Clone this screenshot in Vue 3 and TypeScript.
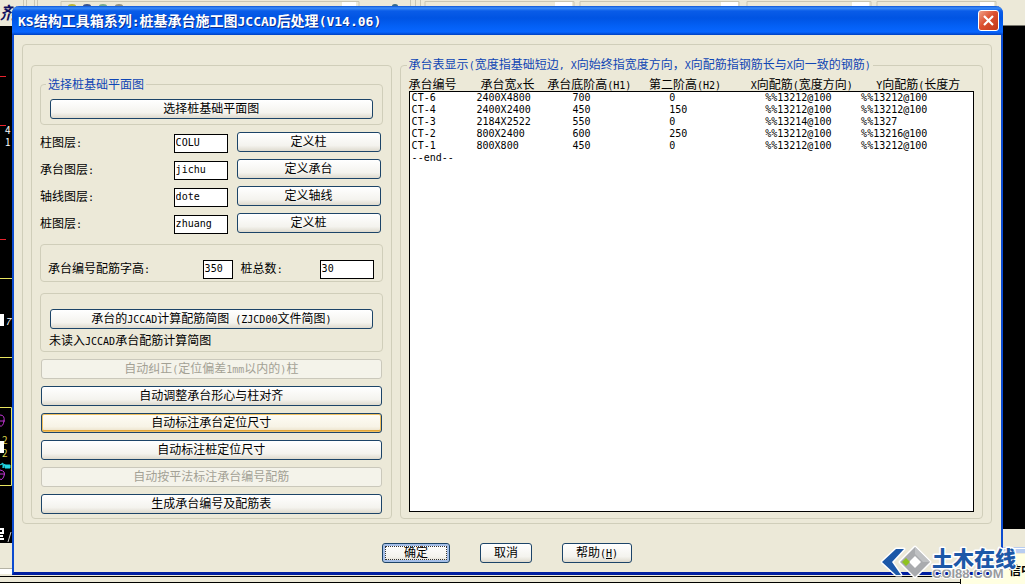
<script setup lang="ts">
import { h, ref, type FunctionalComponent } from 'vue'

interface Layer { id: string; label: string; value: string; action: string }
interface Action { text: string; disabled?: boolean; hot?: boolean }

// Half-width runs are set in a monospaced face, exactly half the width of a Chinese character.
const Mixed: FunctionalComponent<{ text: string }> = (props) =>
  (props.text.match(/[\x20-\x7e]+|[^\x20-\x7e]+/g) ?? []).map((run) =>
    /^[\x20-\x7e]/.test(run) ? h('span', { class: 'half' }, run) : run,
  )
Mixed.props = ['text']

const layers = ref<Layer[]>([
  { id: 'column', label: '柱图层:', value: 'COLU', action: '定义柱' },
  { id: 'cap', label: '承台图层:', value: 'jichu', action: '定义承台' },
  { id: 'axis', label: '轴线图层:', value: 'dote', action: '定义轴线' },
  { id: 'pile', label: '桩图层:', value: 'zhuang', action: '定义桩' },
])
const textHeight = ref('350')
const pileTotal = ref('30')

const actions: Action[] = [
  { text: '自动纠正(定位偏差1mm以内的)柱', disabled: true },
  { text: '自动调整承台形心与柱对齐' },
  { text: '自动标注承台定位尺寸', hot: true },
  { text: '自动标注桩定位尺寸' },
  { text: '自动按平法标注承台编号配筋', disabled: true },
  { text: '生成承台编号及配筋表' },
]

const headings = ['承台编号', '承台宽x长', '承台底阶高(H1)', '第二阶高(H2)', 'X向配筋(宽度方向)', 'Y向配筋(长度方']
const rows: string[][] = [
  ['CT-6', '2400X4800', '700', '0', '%%13212@100', '%%13212@100'],
  ['CT-4', '2400X2400', '450', '150', '%%13212@100', '%%13212@100'],
  ['CT-3', '2184X2522', '550', '0', '%%13214@100', '%%1327'],
  ['CT-2', '800X2400', '600', '250', '%%13212@100', '%%13216@100'],
  ['CT-1', '800X800', '450', '0', '%%13212@100', '%%13212@100'],
]
</script>

<template>
  <div class="desktop">
    <svg class="toolbar" height="6" aria-hidden="true">
      <g fill="none" stroke="#c9c6b4">
        <path d="M23.500 0V6M26.500 0V6M34.500 0V6M37.500 0V6M61 6V1.500H359V6M410.500 0V6M415.500 0V6M420.500 0V6M425 6V1.500H574V6M580 6V1.500H739V6M747 6V1.500H871V6M877 6V1.500H996V6" />
      </g>
      <path d="M342 2h14v4h-14zM555 2h17v4h-17zM721 2h17v4h-17zM852 2h17v4h-17zM980 2h14v4h-14z" fill="#fff" />
      <ellipse cx="72" cy="6" rx="4" ry="2" fill="#b9b63a" />
      <ellipse cx="87" cy="6" rx="4" ry="2" fill="#39538c" />
      <ellipse cx="103" cy="6" rx="4" ry="2" fill="#77a98a" />
      <ellipse cx="119" cy="6" rx="4" ry="2" fill="#909080" />
      <ellipse cx="395" cy="6" rx="3" ry="2" fill="#356a8a" />
    </svg>
    <svg class="drawing left" width="14" height="584" viewBox="0 0 14 584" aria-hidden="true">
      <path d="M0 0H14V26H0z" fill="#ece9d8" />
      <path d="M0 26H14V543H0z" fill="#000" />
      <text x="0" y="19" font-size="17" font-weight="700" font-style="italic" fill="#10105e">剂</text>
      <path d="M0 76H6V77H0zM0 125H6V126H0zM0 239H6V240H0z" fill="#e8232d" />
      <path d="M0 278.500H12M0 357.500H12M0 407.500H11.500V485.500H0" stroke="#e8e560" fill="none" />
      <text x="5" y="134" font-size="10" fill="#fff">4</text>
      <text x="5" y="146" font-size="10" fill="#fff">1</text>
      <path d="M0 314H4V326H0z" fill="#fff" />
      <text x="5" y="325" font-size="10" font-style="italic" fill="#fff">7</text>
      <path d="M0 415Q5 415 4 421T0 426M0 421H5M0 470Q6 471 4 476T0 479M0 474H5" stroke="#c235d5" fill="none" />
      <text x="2" y="444" font-size="10" fill="#dbd24c">2</text>
      <text x="2" y="457" font-size="10" fill="#dbd24c">2</text>
      <path d="M0 441H4V453H0z" fill="#fff" />
      <path d="M0 465L3 463 3 468 5 464M5 465H10V468H5z" stroke="#21d7e5" fill="#21d7e5" />
      <path d="M0 529H3V533H0M0 536H3M0 539H4" stroke="#fff" stroke-width="2" fill="none" />
      <path d="M8 542L11 532" stroke="#ccc" />
      <path d="M0 543H14V569H0z" fill="#ece9d8" />
      <path d="M0 568.500H14" stroke="#b5b3a5" />
      <path d="M0 569H14V574H0z" fill="#fff" />
    </svg>
    <svg class="drawing right" width="24" height="584" viewBox="0 0 24 584" aria-hidden="true">
      <path d="M0 0H24V25H0z" fill="#ece9d8" />
      <path d="M0 25.500H24" stroke="#77766d" />
      <path d="M0 26H24V529H0z" fill="#000" />
      <path d="M0 529H24V547H0z" fill="#ece9d8" />
      <path d="M0 547H24V553H0z" fill="#b8cdf0" />
      <path d="M0 548.500H24" stroke="#fff" />
    </svg>
    <div class="statusbar" aria-hidden="true"></div>
    <div class="tip"><span>信中</span></div>

    <main class="dialog">
      <header class="titlebar">
        <h1><Mixed text="KS结构工具箱系列:桩基承台施工图JCCAD后处理(V14.06)" /></h1>
        <button class="close" type="button" aria-label="关闭">
          <svg width="19" height="19" viewBox="0 0 19 19"><path d="M5 5L14 14M14 5L5 14" stroke="#fff" stroke-width="2.200" /></svg>
        </button>
      </header>

      <form class="body" @submit.prevent>
        <div class="frame panels">
          <section class="frame settings">
            <fieldset class="pick">
              <legend>选择桩基础平面图</legend>
              <button type="button" class="btn">选择桩基础平面图</button>
            </fieldset>

            <div class="layers">
              <div v-for="layer in layers" :key="layer.id" class="layer">
                <label :for="layer.id"><Mixed :text="layer.label" /></label>
                <input :id="layer.id" v-model="layer.value" type="text" />
                <button type="button" class="btn">{{ layer.action }}</button>
              </div>
            </div>

            <div class="frame numbers">
              <label for="text-height"><Mixed text="承台编号配筋字高:" /></label>
              <input id="text-height" v-model="textHeight" type="text" />
              <label for="pile-total"><Mixed text="桩总数:" /></label>
              <input id="pile-total" v-model="pileTotal" type="text" />
            </div>

            <div class="frame diagram">
              <button type="button" class="btn"><Mixed text="承台的JCCAD计算配筋简图 (ZJCD00文件简图)" /></button>
              <p><Mixed text="未读入JCCAD承台配筋计算简图" /></p>
            </div>

            <div class="actions">
              <button
                v-for="action in actions"
                :key="action.text"
                type="button"
                class="btn"
                :class="{ hot: action.hot }"
                :disabled="action.disabled"
              ><Mixed :text="action.text" /></button>
            </div>
          </section>

          <fieldset class="list">
            <legend><Mixed text="承台表显示(宽度指基础短边, X向始终指宽度方向，X向配筋指钢筋长与X向一致的钢筋)" /></legend>
            <table>
              <thead>
                <tr><th v-for="heading in headings" :key="heading" scope="col"><Mixed :text="heading" /></th></tr>
              </thead>
              <tbody>
                <tr v-for="row in rows" :key="row[0]">
                  <td v-for="(cell, i) in row" :key="i">{{ cell }}</td>
                </tr>
                <tr><td>--end--</td></tr>
              </tbody>
            </table>
          </fieldset>
        </div>

        <footer>
          <button type="submit" class="btn ok">确定</button>
          <button type="button" class="btn cancel">取消</button>
          <button type="button" class="btn help">帮助<span class="half">(<u>H</u>)</span></button>
        </footer>
      </form>
    </main>

    <svg class="brand" width="146" height="38" viewBox="0 0 146 38" role="img" aria-label="土木在线">
      <g stroke="#fff" stroke-width="3" stroke-linejoin="round" paint-order="stroke">
        <path d="M3 19L17 6H25L13 19 22 32H17z" fill="#1c58a8" />
        <path d="M36 4L51 19 36 34 21 19z" fill="#a9abae" />
      </g>
      <path d="M36 4L51 19 44 19 36 11z" fill="#bfc1c3" />
      <path d="M36 13L42 19 36 25 30 19z" fill="#fff" />
      <path d="M27 15L31 19 27 23 23 19z" fill="#8fc31f" />
      <g paint-order="stroke" stroke="#fff" stroke-linejoin="round">
        <text class="brand-site" x="53" y="35" stroke-width="2" fill="#999b9d">COI88.COM</text>
        <text class="brand-name" x="53" y="23" stroke-width="3" fill="#1c58a8">土木在线</text>
      </g>
    </svg>
  </div>
</template>

<style>
body {
  margin: 0;
}
.half {
  font-family: "DejaVu Sans Mono", monospace;
  font-size: 10px;
  white-space: pre;
}
</style>

<style scoped>
* {
  box-sizing: border-box;
}
.desktop {
  position: relative;
  display: flex;
  min-height: 100vh;
  padding: 6px 22px 10px 12px;
  overflow: hidden;
  background: #ece9d8;
  color: #000;
  font-family: "Noto Sans CJK SC", sans-serif;
  font-size: 12px;
  line-height: 16px;
}
.toolbar {
  position: absolute;
  top: 0;
  left: 0;
  width: 100%;
}
.drawing {
  position: absolute;
  top: 0;
}
.drawing.left {
  left: 0;
}
.drawing.right {
  right: 0;
}
.statusbar {
  position: absolute;
  right: 0;
  bottom: 0;
  left: 0;
  height: 10px;
  border-top: 1px solid #ece9d8;
  background: linear-gradient(#000 1px, #ece9d8 1px, #ece9d8 6px, #000 6px, #000 7px, #fffff4 7px);
}
.tip {
  position: absolute;
  right: 0;
  bottom: 0;
  width: 65px;
  height: 31px;
  padding: 8px 0 0 48px;
  overflow: hidden;
  border-left: 1px solid #000;
  background: #ffffe1;
  font-weight: 700;
  white-space: nowrap;
}
.dialog {
  position: relative;
  display: flex;
  flex: 1;
  flex-direction: column;
  min-width: 0;
  border: solid #0b4bd0;
  border-width: 0 2px 3px;
  border-bottom-color: #001ea0;
  border-radius: 7px 7px 0 0;
  background: #ece9d8;
}
.titlebar {
  display: flex;
  align-items: center;
  justify-content: space-between;
  height: 29px;
  margin: 0 -2px;
  padding: 0 4px 0 6px;
  border-radius: 7px 7px 0 0;
  background: linear-gradient(#0b53d6 0, #3a8cf8 2px, #0a5ce8 5px, #0054e3 12px, #0360f5 20px, #0866ff 26px, #0040c0 29px);
}
h1 {
  margin: 0;
  color: #fff;
  font-size: 14px;
  font-weight: 700;
  line-height: 20px;
  text-shadow: 1px 1px #0a2f90;
  white-space: nowrap;
}
h1 :deep(.half) {
  font-size: 13px;
}
.close {
  width: 21px;
  height: 21px;
  padding: 0;
  border: 1px solid #fff;
  border-radius: 3px;
  background: linear-gradient(135deg, #f0a088, #dc5030 45%, #c0391a);
}
.close svg {
  display: block;
}
.body {
  display: flex;
  flex: 1;
  flex-direction: column;
  padding: 9px 9px 9px 8px;
}
.frame,
fieldset {
  min-width: 0;
  margin: 0;
  border: 1px solid #d0ceba;
  border-radius: 4px;
}
.panels {
  display: grid;
  flex: 1;
  grid-template-columns: 361fr 584fr;
  gap: 8px;
  padding: 11px 8px 4px;
}
legend {
  padding: 0 2px;
  color: #0f46b4;
  white-space: nowrap;
}
.settings {
  display: flex;
  flex-direction: column;
  margin-top: 9px;
  padding: 10px 8px 4px;
}
.pick {
  padding: 7px 9px 5px;
}
.pick legend {
  margin-left: -4px;
}
.btn {
  display: block;
  width: 100%;
  height: 20px;
  padding: 0 0 2px;
  border: 1px solid #1c4468;
  border-radius: 3px;
  background: linear-gradient(#fff, #f4f3ee 70%, #dedace);
  color: #000;
  font: inherit;
  line-height: 16px;
  white-space: nowrap;
}
.btn:disabled {
  border-color: #cac8bb;
  background: #f4f3ea;
  color: #a3a195;
}
.btn.hot {
  background: linear-gradient(#fffdf5, #f7f3e6 70%, #eadfc4);
  box-shadow: inset 0 0 0 1px #f0c060, inset 0 -2px #e2a638;
}
.layers {
  display: grid;
  gap: 6px;
  margin-top: 7px;
  padding-right: 2px;
}
.layer {
  display: grid;
  grid-template-columns: 1fr 54px 144px;
  gap: 9px;
  height: 21px;
}
label {
  padding-top: 2px;
  white-space: nowrap;
}
input {
  width: 100%;
  height: 19px;
  margin-top: 2px;
  padding: 0 1px 2px;
  border: 1px solid #000;
  border-radius: 0;
  background: #fff;
  color: #000;
  font-family: "DejaVu Sans Mono", monospace;
  font-size: 10px;
}
.numbers {
  display: grid;
  grid-template-columns: 1fr 30px 71px 54px;
  column-gap: 8px;
  align-items: center;
  height: 38px;
  margin-top: 10px;
  padding: 10px 8px 0 7px;
}
.diagram {
  height: 59px;
  margin-top: 11px;
  padding: 15px 9px 0;
}
p {
  margin: 3px -1px 0;
  white-space: nowrap;
}
.actions {
  display: grid;
  gap: 7px;
  margin-top: 7px;
  padding: 0 1px;
}
.list {
  display: flex;
  flex-direction: column;
  padding: 3px 8px 6px;
}
.list legend {
  margin-left: -2px;
}
table {
  display: flex;
  flex: 1;
  flex-direction: column;
}
thead {
  display: block;
}
thead tr {
  display: grid;
  grid-template-columns: 72fr 67fr 102fr 102fr 126fr 98fr;
  height: 14px;
}
th {
  padding: 0;
  font-weight: 400;
  line-height: 14px;
  text-align: left;
  white-space: nowrap;
}
tbody {
  display: block;
  flex: 1;
  border: 1px solid #000;
  background: #fff;
}
tbody tr {
  display: grid;
  grid-template-columns: 65fr 96fr 97fr 96fr 96fr 112fr;
  padding-left: 2px;
}
td {
  padding: 0;
  font-family: "DejaVu Sans Mono", monospace;
  font-size: 10px;
  line-height: 12px;
  white-space: nowrap;
}
footer {
  display: flex;
  justify-content: center;
  gap: 30px;
  padding-top: 19px;
}
.ok {
  width: 68px;
  outline: 1px dotted #333;
  outline-offset: -4px;
  box-shadow: inset 0 0 0 2px #a5bfe8;
}
.cancel {
  width: 52px;
}
.help {
  width: 70px;
}
.brand {
  position: absolute;
  right: 0;
  bottom: 4px;
}
.brand-name {
  font-size: 21px;
  font-weight: 900;
}
.brand-site {
  font-family: "Liberation Sans", sans-serif;
  font-size: 13px;
  font-weight: 700;
}
</style>
